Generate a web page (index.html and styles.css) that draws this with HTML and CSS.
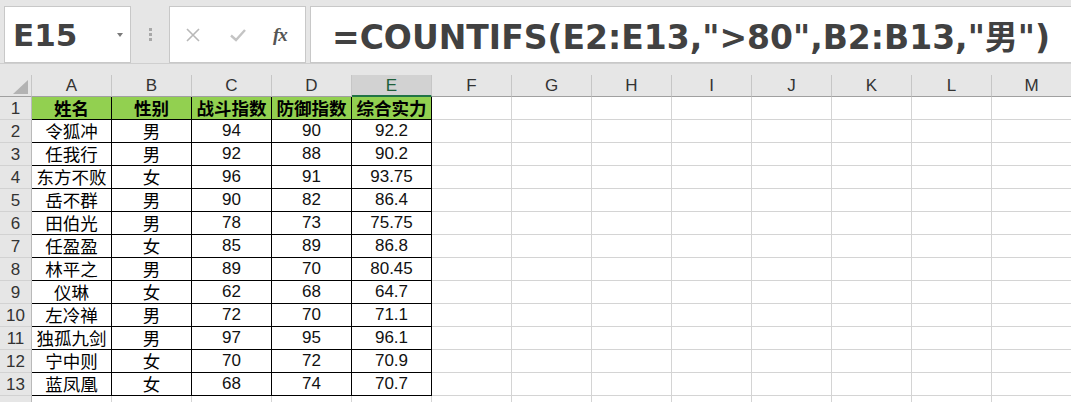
FILE: index.html
```html
<!DOCTYPE html>
<html lang="zh">
<head>
<meta charset="utf-8">
<title>COUNTIFS</title>
<link rel="stylesheet" href="styles.css">
</head>
<body>
<div class="app">
  <div class="toolbar">
    <div class="namebox">
      <span class="name">E15</span>
      <span class="caret"></span>
    </div>
    <div class="grip"><i></i><i></i><i></i></div>
    <div class="btnbox">
      <svg class="ico" width="16" height="16" viewBox="0 0 16 16"><path d="M2 2 L14 14 M14 2 L2 14" stroke="#b8b8b8" stroke-width="1.6" fill="none"/></svg>
      <svg class="ico" width="18" height="16" viewBox="0 0 18 16"><path d="M2 8.5 L7 13 L16 3" stroke="#c4c4c4" stroke-width="2.4" fill="none"/></svg>
      <span class="fx">fx</span>
    </div>
    <div class="formula">=COUNTIFS(E2:E13,"&gt;80",B2:B13,"男")</div>
  </div>
  <div class="sheet">
    <div class="row head">
      <div class="corner"><span class="tri"></span></div>
      <div class="ch">A</div><div class="ch">B</div><div class="ch">C</div><div class="ch">D</div><div class="ch sel">E</div><div class="ch">F</div><div class="ch">G</div><div class="ch">H</div><div class="ch">I</div><div class="ch">J</div><div class="ch">K</div><div class="ch">L</div><div class="ch">M</div>
    </div>
    <div class="row">
      <div class="rh">1</div>
      <div class="c t th">姓名</div><div class="c t th">性别</div><div class="c t th">战斗指数</div><div class="c t th">防御指数</div><div class="c t th">综合实力</div>
      <div class="c"></div><div class="c"></div><div class="c"></div><div class="c"></div><div class="c"></div><div class="c"></div><div class="c"></div><div class="c"></div>
    </div>
    <div class="row"><div class="rh">2</div><div class="c t">令狐冲</div><div class="c t">男</div><div class="c t n">94</div><div class="c t n">90</div><div class="c t n">92.2</div><div class="c"></div><div class="c"></div><div class="c"></div><div class="c"></div><div class="c"></div><div class="c"></div><div class="c"></div><div class="c"></div></div>
    <div class="row"><div class="rh">3</div><div class="c t">任我行</div><div class="c t">男</div><div class="c t n">92</div><div class="c t n">88</div><div class="c t n">90.2</div><div class="c"></div><div class="c"></div><div class="c"></div><div class="c"></div><div class="c"></div><div class="c"></div><div class="c"></div><div class="c"></div></div>
    <div class="row"><div class="rh">4</div><div class="c t">东方不败</div><div class="c t">女</div><div class="c t n">96</div><div class="c t n">91</div><div class="c t n">93.75</div><div class="c"></div><div class="c"></div><div class="c"></div><div class="c"></div><div class="c"></div><div class="c"></div><div class="c"></div><div class="c"></div></div>
    <div class="row"><div class="rh">5</div><div class="c t">岳不群</div><div class="c t">男</div><div class="c t n">90</div><div class="c t n">82</div><div class="c t n">86.4</div><div class="c"></div><div class="c"></div><div class="c"></div><div class="c"></div><div class="c"></div><div class="c"></div><div class="c"></div><div class="c"></div></div>
    <div class="row"><div class="rh">6</div><div class="c t">田伯光</div><div class="c t">男</div><div class="c t n">78</div><div class="c t n">73</div><div class="c t n">75.75</div><div class="c"></div><div class="c"></div><div class="c"></div><div class="c"></div><div class="c"></div><div class="c"></div><div class="c"></div><div class="c"></div></div>
    <div class="row"><div class="rh">7</div><div class="c t">任盈盈</div><div class="c t">女</div><div class="c t n">85</div><div class="c t n">89</div><div class="c t n">86.8</div><div class="c"></div><div class="c"></div><div class="c"></div><div class="c"></div><div class="c"></div><div class="c"></div><div class="c"></div><div class="c"></div></div>
    <div class="row"><div class="rh">8</div><div class="c t">林平之</div><div class="c t">男</div><div class="c t n">89</div><div class="c t n">70</div><div class="c t n">80.45</div><div class="c"></div><div class="c"></div><div class="c"></div><div class="c"></div><div class="c"></div><div class="c"></div><div class="c"></div><div class="c"></div></div>
    <div class="row"><div class="rh">9</div><div class="c t">仪琳</div><div class="c t">女</div><div class="c t n">62</div><div class="c t n">68</div><div class="c t n">64.7</div><div class="c"></div><div class="c"></div><div class="c"></div><div class="c"></div><div class="c"></div><div class="c"></div><div class="c"></div><div class="c"></div></div>
    <div class="row"><div class="rh">10</div><div class="c t">左冷禅</div><div class="c t">男</div><div class="c t n">72</div><div class="c t n">70</div><div class="c t n">71.1</div><div class="c"></div><div class="c"></div><div class="c"></div><div class="c"></div><div class="c"></div><div class="c"></div><div class="c"></div><div class="c"></div></div>
    <div class="row"><div class="rh">11</div><div class="c t">独孤九剑</div><div class="c t">男</div><div class="c t n">97</div><div class="c t n">95</div><div class="c t n">96.1</div><div class="c"></div><div class="c"></div><div class="c"></div><div class="c"></div><div class="c"></div><div class="c"></div><div class="c"></div><div class="c"></div></div>
    <div class="row"><div class="rh">12</div><div class="c t">宁中则</div><div class="c t">女</div><div class="c t n">70</div><div class="c t n">72</div><div class="c t n">70.9</div><div class="c"></div><div class="c"></div><div class="c"></div><div class="c"></div><div class="c"></div><div class="c"></div><div class="c"></div><div class="c"></div></div>
    <div class="row"><div class="rh">13</div><div class="c t">蓝凤凰</div><div class="c t">女</div><div class="c t n">68</div><div class="c t n">74</div><div class="c t n">70.7</div><div class="c"></div><div class="c"></div><div class="c"></div><div class="c"></div><div class="c"></div><div class="c"></div><div class="c"></div><div class="c"></div></div>
    <div class="row"><div class="rh"></div><div class="c"></div><div class="c"></div><div class="c"></div><div class="c"></div><div class="c"></div><div class="c"></div><div class="c"></div><div class="c"></div><div class="c"></div><div class="c"></div><div class="c"></div><div class="c"></div><div class="c"></div></div>
  </div>
</div>
</body>
</html>
```

FILE: styles.css
```css
* { box-sizing: border-box; }
html, body { margin: 0; padding: 0; }
body {
  width: 1071px;
  height: 402px;
  overflow: hidden;
  background: #ffffff;
  font-family: "Liberation Sans", "Noto Sans CJK SC", sans-serif;
}
.app { width: 1071px; height: 402px; overflow: hidden; }

.toolbar {
  height: 64px;
  background: #e6e6e6;
  border-bottom: 1px solid #cfcfcf;
  display: flex;
  align-items: flex-start;
  padding: 6px 0 0 4px;
}
.namebox {
  width: 127px;
  height: 57px;
  background: #fff;
  border: 1px solid #c8c8c8;
  display: flex;
  align-items: center;
  padding-left: 8px;
  position: relative;
}
.name {
  font-family: "DejaVu Sans", sans-serif;
  font-weight: 700;
  font-size: 31px;
  color: #424242;
}
.caret {
  position: absolute;
  left: 112px;
  top: 26px;
  width: 0; height: 0;
  border-left: 3.5px solid transparent;
  border-right: 3.5px solid transparent;
  border-top: 4px solid #7a7a7a;
}
.grip {
  width: 38px;
  height: 57px;
  display: flex;
  flex-direction: column;
  align-items: center;
  justify-content: center;
  gap: 2px;
}
.grip i {
  display: block;
  width: 3px;
  height: 3px;
  background: #a8a8a8;
}
.btnbox {
  width: 137px;
  height: 57px;
  background: #fff;
  border: 1px solid #c8c8c8;
  display: flex;
  align-items: center;
  padding-left: 15px;
  gap: 28px;
}
.fx {
  font-family: "Liberation Serif", serif;
  font-style: italic;
  font-weight: 700;
  font-size: 19px;
  color: #555;
  margin-left: -2px;
  letter-spacing: -1px;
}
.formula {
  margin-left: 4px;
  flex: 1;
  height: 57px;
  background: #fff;
  border: 1px solid #c8c8c8;
  border-right: none;
  display: flex;
  align-items: center;
  padding-left: 21px;
  font-family: "DejaVu Sans", "Noto Sans CJK SC", sans-serif;
  font-weight: 700;
  font-size: 33px;
  color: #414141;
  white-space: nowrap;
  overflow: hidden;
}

.sheet { background: #e6e6e6; padding-top: 11px; }
.row { display: flex; height: 23px; }
.row.head { height: 22px; }
.corner {
  flex: 0 0 32px;
  height: 22px;
  border-right: 1px solid #c6c6c6;
  border-bottom: 1px solid #a0a0a0;
  position: relative;
}
.tri {
  position: absolute;
  left: 13px;
  top: 5px;
  width: 0; height: 0;
  border-left: 15px solid transparent;
  border-bottom: 14px solid #b3b3b3;
}
.ch {
  flex: 0 0 80px;
  height: 22px;
  border-right: 1px solid #c6c6c6;
  border-bottom: 1px solid #a0a0a0;
  text-align: center;
  font-size: 17px;
  line-height: 22px;
  color: #333;
}
.ch.sel {
  background: #d2d2d2;
  border-bottom: 2px solid #217346;
  color: #1e5f3a;
}
.rh {
  flex: 0 0 32px;
  height: 23px;
  background: #e6e6e6;
  border-right: 1px solid #b9b9b9;
  border-bottom: 1px solid #d2d2d2;
  text-align: center;
  font-size: 17px;
  line-height: 23px;
  color: #333;
}
.c {
  flex: 0 0 80px;
  height: 23px;
  background: #fff;
  border-right: 1px solid #d4d4d4;
  border-bottom: 1px solid #d4d4d4;
  text-align: center;
  font-family: "Noto Sans CJK SC", sans-serif;
  font-size: 17.5px;
  line-height: 22px;
  color: #000;
  white-space: nowrap;
}
.c.t { border-right-color: #000; border-bottom-color: #000; }
.c.th { background: #92d050; font-weight: 700; font-size: 17.5px; }
.c.n { font-family: "Liberation Sans", sans-serif; font-size: 17px; color: #111; }
```
